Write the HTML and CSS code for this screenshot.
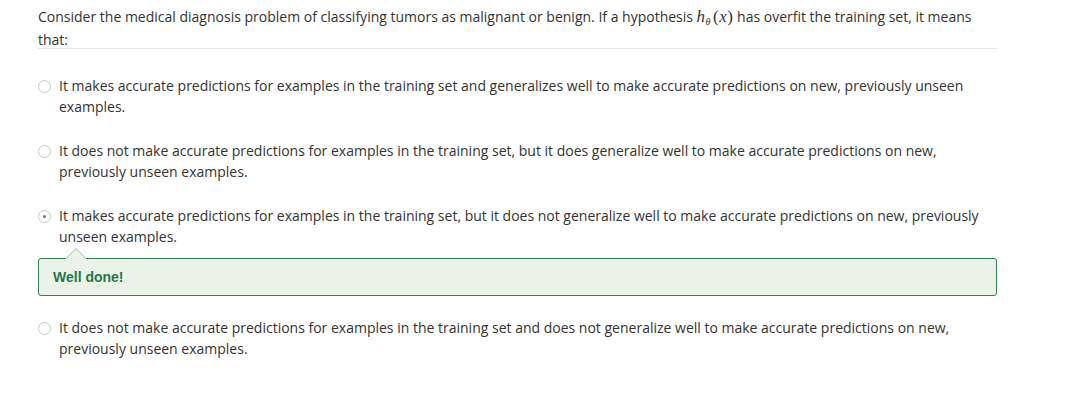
FILE: index.html
```html
<!DOCTYPE html>
<html>
<head>
<meta charset="utf-8">
<link rel="stylesheet" href="styles.css">
</head>
<body>
<div class="quiz">
  <div class="question">Consider the medical diagnosis problem of classifying tumors as malignant or benign. If a hypothesis <span class="math"><i>h</i><span class="sub">θ</span>(<i>x</i>)</span> has overfit the training set, it means that:</div>
  <div class="options">
    <div class="option">
      <span class="radio"></span>
      <span class="label">It makes accurate predictions for examples in the training set and generalizes well to make accurate predictions on new, previously unseen examples.</span>
    </div>
    <div class="option">
      <span class="radio"></span>
      <span class="label">It does not make accurate predictions for examples in the training set, but it does generalize well to make accurate predictions on new, previously unseen examples.</span>
    </div>
    <div class="option selected">
      <span class="radio"></span>
      <span class="label">It makes accurate predictions for examples in the training set, but it does not generalize well to make accurate predictions on new, previously unseen examples.</span>
    </div>
    <div class="feedback">Well done!</div>
    <div class="option last">
      <span class="radio"></span>
      <span class="label">It does not make accurate predictions for examples in the training set and does not generalize well to make accurate predictions on new, previously unseen examples.</span>
    </div>
  </div>
</div>
</body>
</html>
```
FILE: styles.css
```css
html, body { margin: 0; padding: 0; background: #fff; }
body {
  font-family: "Open Sans", "Liberation Sans", sans-serif;
  font-size: 14px;
  color: #333;
}
.quiz {
  width: 959px;
  padding: 6px 0 0 38px;
}
.question {
  line-height: 21px;
  border-bottom: 1px solid #e6e6e6;
  height: 42px;
}
.math {
  font-family: "Liberation Serif", "DejaVu Serif", serif;
  font-size: 17px;
  letter-spacing: 0.5px;
}
.math .sub {
  font-size: 10px;
  font-style: italic;
  position: relative;
  top: 3px;
  margin-right: 2px;
}
.options {
  display: flex;
  flex-direction: column;
  padding-top: 26px;
}
.option {
  display: flex;
  align-items: flex-start;
  line-height: 21px;
  margin-bottom: 23px;
}
.option.selected { margin-bottom: 11px; }
.radio {
  flex: none;
  width: 11px;
  height: 11px;
  border: 1px solid #c8c8c8;
  border-radius: 50%;
  margin: 5px 8px 0 0;
  background: #fff;
  position: relative;
}
.selected .radio::after {
  content: "";
  position: absolute;
  left: 4px;
  top: 4px;
  width: 3px;
  height: 3px;
  border-radius: 50%;
  background: #777;
}
.label { flex: 1; padding-right: 10px; }
.feedback {
  position: relative;
  height: 36px;
  line-height: 36px;
  border: 1px solid #2a8252;
  border-radius: 3px;
  background: #ebf3e7;
  padding-left: 14px;
  font-family: "Liberation Sans", Arial, sans-serif;
  font-weight: bold;
  font-size: 14px;
  color: #24784a;
  margin-bottom: 21px;
}
.feedback::before, .feedback::after {
  content: "";
  position: absolute;
  left: 26px;
  width: 0; height: 0;
  border-left: 11px solid transparent;
  border-right: 11px solid transparent;
}
.feedback::before { top: -11px; border-bottom: 11px solid #8fcaa6; }
.feedback::after { top: -10px; border-bottom: 11px solid #ebf3e7; }
.option.last { margin-bottom: 0; }
```
